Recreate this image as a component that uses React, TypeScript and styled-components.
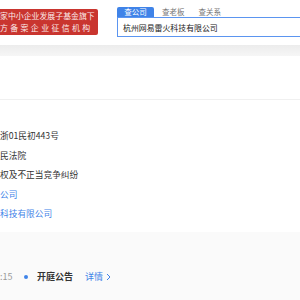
import styled, { createGlobalStyle } from 'styled-components';

const colors = {
    red: '#c9352f',
    blue: '#3f83e8',
    border: '#5b95f0',
    text: '#333',
    grey: '#999',
    line: '#f0f0f0',
    panel: '#fafafa',
};

const GlobalStyle = createGlobalStyle`
    html, body {
        margin: 0;
        padding: 0;
        background: #fff;
    }
    body {
        font-family: "Noto Sans CJK SC", "Noto Sans", "Liberation Sans", sans-serif;
        color: ${colors.text};
    }
`;

const Page = styled.div`
    width: 300px;
    height: 300px;
    overflow: hidden;
`;

const Header = styled.div`
    display: flex;
    align-items: flex-start;
    height: 45px;
`;

const Banner = styled.div`
    flex: 0 0 98px;
    height: 26px;
    margin-top: 9px;
    background: ${colors.red};
    border-radius: 0 2px 2px 0;
    color: #fbeaea;
    font-size: 7.9px;
    display: flex;
    flex-direction: column;
    justify-content: center;
    white-space: nowrap;
    overflow: hidden;
`;

const BannerLine = styled.div<{ $spread?: boolean }>`
    line-height: 12px;
    letter-spacing: ${(p) => (p.$spread ? '2.4px' : '0')};
`;

const Search = styled.div`
    margin-left: 19px;
    margin-top: 7px;
    flex: 1 1 auto;
    min-width: 0;
`;

const Tabs = styled.div`
    display: flex;
    height: 10px;
`;

const Tab = styled.div<{ $active?: boolean }>`
    width: ${(p) => (p.$active ? '37px' : 'auto')};
    margin-right: ${(p) => (p.$active ? '8px' : '14px')};
    border-radius: 2px 2px 0 0;
    background: ${(p) => (p.$active ? colors.blue : 'transparent')};
    color: ${(p) => (p.$active ? '#fff' : '#777')};
    font-size: 7.5px;
    line-height: 10px;
    text-align: center;
`;

const InputBox = styled.div`
    height: 20px;
    box-sizing: border-box;
    border: 1px solid ${colors.border};
    border-right: none;
    padding-left: 5px;
    display: flex;
    align-items: center;
    font-size: 7.9px;
    color: #222;
    white-space: nowrap;
`;

const ShadowBar = styled.div`
    height: 11px;
    background: linear-gradient(#ececec, #f6f6f6);
`;

const Gap = styled.div`
    height: 43px;
    border-bottom: 1px solid ${colors.line};
`;

const Details = styled.div`
    padding: 26px 0 8px;
`;

const Line = styled.div<{ $link?: boolean }>`
    font-size: 8.7px;
    line-height: 19.5px;
    height: 19.5px;
    white-space: nowrap;
    color: ${(p) => (p.$link ? colors.blue : colors.text)};
`;

const Footer = styled.div`
    background: ${colors.panel};
    height: 68px;
    padding-top: 37px;
    box-sizing: border-box;
`;

const Row = styled.div`
    display: flex;
    align-items: center;
    height: 16px;
    font-size: 9px;
`;

const Time = styled.span`
    color: ${colors.grey};
    width: 24px;
`;

const Dot = styled.span`
    width: 4px;
    height: 4px;
    border-radius: 50%;
    background: ${colors.blue};
    margin-right: 9px;
`;

const Title = styled.span`
    font-weight: bold;
    color: ${colors.text};
    margin-right: 12px;
`;

const More = styled.span`
    color: ${colors.blue};
    display: flex;
    align-items: center;
    gap: 3px;
`;

const App = () => (
    <Page>
        <GlobalStyle />
        <Header>
            <Banner>
                <BannerLine>家中小企业发展子基金旗下</BannerLine>
                <BannerLine $spread>方备案企业征信机构</BannerLine>
            </Banner>
            <Search>
                <Tabs>
                    <Tab $active>查公司</Tab>
                    <Tab>查老板</Tab>
                    <Tab>查关系</Tab>
                </Tabs>
                <InputBox>杭州网易雷火科技有限公司</InputBox>
            </Search>
        </Header>
        <ShadowBar />
        <Gap />
        <Details>
            <Line>浙01民初443号</Line>
            <Line>民法院</Line>
            <Line>权及不正当竞争纠纷</Line>
            <Line $link>公司</Line>
            <Line $link>科技有限公司</Line>
        </Details>
        <Footer>
            <Row>
                <Time>:15</Time>
                <Dot />
                <Title>开庭公告</Title>
                <More>
                    详情
                    <svg width="5" height="8" viewBox="0 0 5 8">
                        <path d="M1 1l3 3-3 3" fill="none" stroke={colors.blue} strokeWidth="1" />
                    </svg>
                </More>
            </Row>
        </Footer>
    </Page>
);

export default App;
